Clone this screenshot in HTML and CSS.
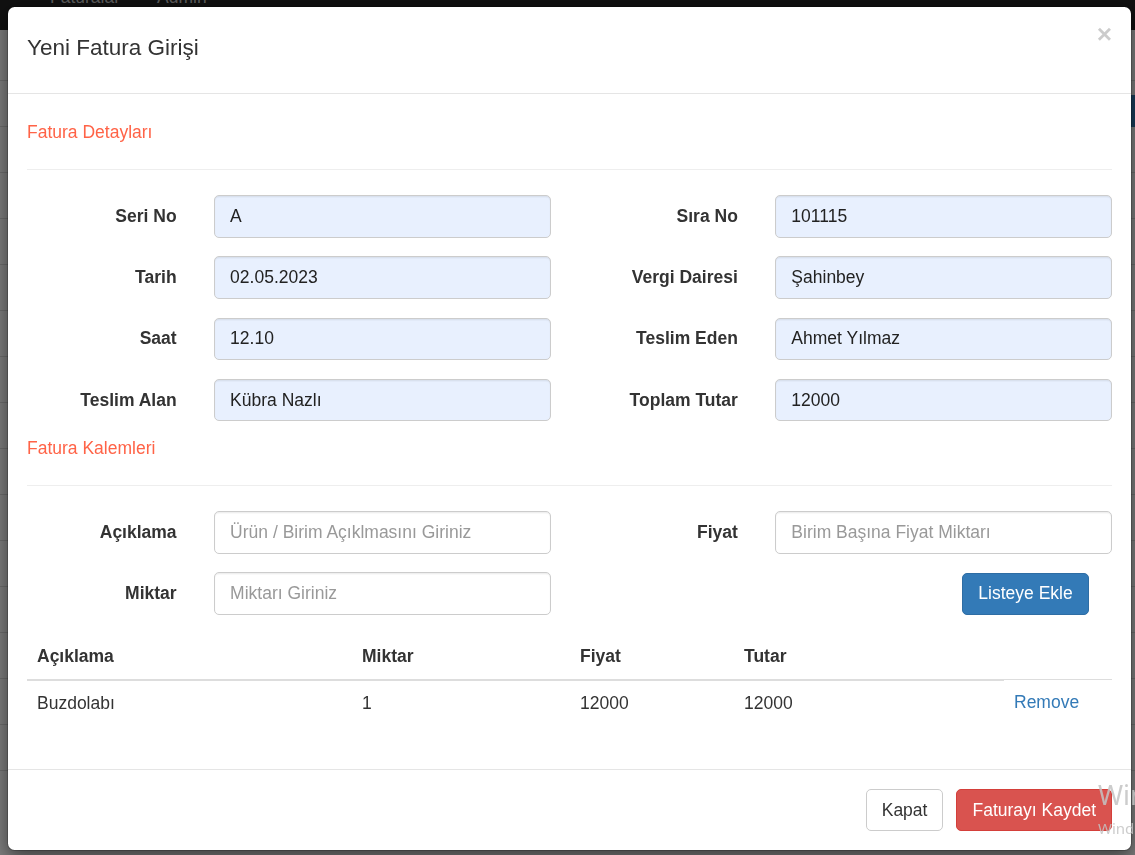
FILE: index.html
```html
<!DOCTYPE html>
<html lang="tr">
<head>
<meta charset="utf-8">
<title>Yeni Fatura Girişi</title>
<link rel="stylesheet" href="styles.css">
</head>
<body>
<div class="page">
  <nav class="navbar">
    <span class="nav-link">Faturalar</span>
    <span class="nav-link">Admin</span>
  </nav>
  <div class="page-spacer"></div>
  <div class="page-row page-row--head"><span class="page-btn"></span></div>
  <div class="page-row"></div>
  <div class="page-row"></div>
  <div class="page-row"></div>
  <div class="page-row"></div>
  <div class="page-row"></div>
  <div class="page-row"></div>
  <div class="page-row"></div>
  <div class="page-row"></div>
  <div class="page-row"></div>
  <div class="page-row"></div>
  <div class="page-row"></div>
  <div class="page-row"></div>
  <div class="page-row"></div>
  <div class="page-row"></div>
  <div class="page-row"></div>
</div>
<div class="backdrop"></div>

<div class="modal">
  <div class="modal-content">
    <div class="modal-header">
      <h4 class="modal-title">Yeni Fatura Girişi</h4>
      <button class="close" type="button">×</button>
    </div>
    <div class="modal-body">
      <div class="section-title section-title--first">Fatura Detayları</div>
      <hr class="divider">
      <div class="form-grid">
        <label class="form-label">Seri No</label>
        <input class="form-control filled" value="A">
        <label class="form-label">Sıra No</label>
        <input class="form-control filled" value="101115">

        <label class="form-label">Tarih</label>
        <input class="form-control filled" value="02.05.2023">
        <label class="form-label">Vergi Dairesi</label>
        <input class="form-control filled" value="Şahinbey">

        <label class="form-label">Saat</label>
        <input class="form-control filled" value="12.10">
        <label class="form-label">Teslim Eden</label>
        <input class="form-control filled" value="Ahmet Yılmaz">

        <label class="form-label">Teslim Alan</label>
        <input class="form-control filled" value="Kübra Nazlı">
        <label class="form-label">Toplam Tutar</label>
        <input class="form-control filled" value="12000">
      </div>

      <div class="section-title section-title--items">Fatura Kalemleri</div>
      <hr class="divider">
      <div class="form-grid form-grid--items">
        <label class="form-label">Açıklama</label>
        <input class="form-control" placeholder="Ürün / Birim Açıklmasını Giriniz">
        <label class="form-label">Fiyat</label>
        <input class="form-control" placeholder="Birim Başına Fiyat Miktarı">

        <label class="form-label">Miktar</label>
        <input class="form-control" placeholder="Miktarı Giriniz">
        <button class="btn btn-primary btn-add" type="button">Listeye Ekle</button>
      </div>

      <table class="items-table">
        <colgroup>
          <col class="col-desc">
          <col class="col-qty">
          <col class="col-price">
          <col class="col-total">
          <col class="col-action">
        </colgroup>
        <thead>
          <tr>
            <th>Açıklama</th>
            <th>Miktar</th>
            <th>Fiyat</th>
            <th>Tutar</th>
          </tr>
        </thead>
        <tbody>
          <tr>
            <td>Buzdolabı</td>
            <td>1</td>
            <td>12000</td>
            <td>12000</td>
            <td><a class="link" href="#">Remove</a></td>
          </tr>
        </tbody>
      </table>
    </div>
    <div class="modal-footer">
      <button class="btn btn-default" type="button">Kapat</button>
      <button class="btn btn-danger" type="button">Faturayı Kaydet</button>
    </div>
  </div>
</div>

<div class="watermark">
  <div class="watermark-title">Windows'u Etkinleştir</div>
  <div class="watermark-sub">Windows'u etkinleştirmek için Ayarlar'a gidin.</div>
</div>
</body>
</html>
```

FILE: styles.css
```css
* {
  box-sizing: border-box;
}

html,
body {
  margin: 0;
  padding: 0;
}

body {
  width: 1135px;
  height: 855px;
  overflow: hidden;
  background: #fff;
  color: #333;
  font-family: "Liberation Sans", Arial, sans-serif;
  font-size: 17.5px;
  line-height: 25px;
}

/* ---------- background page ---------- */
.navbar {
  height: 30px;
  background: #222;
  display: flex;
  align-items: flex-start;
  gap: 37px;
  padding-left: 50px;
  overflow: hidden;
}

.nav-link {
  color: #bbb;
  margin-top: -15.5px;
}

.page-spacer {
  height: 50px;
}

.page-row {
  height: 46px;
  border-top: 1px solid #ddd;
  display: flex;
  justify-content: flex-end;
}

.page-btn {
  width: 80px;
  height: 32px;
  margin-top: 14px;
  background: #337ab7;
}

.backdrop {
  position: fixed;
  inset: 0;
  background: rgba(0, 0, 0, 0.5);
}

/* ---------- modal ---------- */
.modal {
  position: absolute;
  left: 7.25px;
  top: 6px;
  width: 1124.5px;
}

.modal-content {
  background: #fff;
  background-clip: padding-box;
  border: 1px solid rgba(0, 0, 0, 0.2);
  border-radius: 7.5px;
  box-shadow: 0 6.25px 18.75px rgba(0, 0, 0, 0.5);
}

.modal-header {
  height: 87px;
  padding: 24.75px 18.75px 0;
  border-bottom: 1px solid #e5e5e5;
  display: flex;
  justify-content: space-between;
  align-items: flex-start;
}

.modal-title {
  margin: 0;
  font-size: 22.5px;
  font-weight: normal;
  line-height: 32px;
  color: #333;
}

.close {
  margin-top: -10.75px;
  padding: 0;
  border: 0;
  background: none;
  font-family: "Liberation Sans", Arial, sans-serif;
  font-size: 26.25px;
  font-weight: bold;
  line-height: 1;
  color: #000;
  opacity: 0.2;
}

.modal-body {
  padding: 18.75px;
}

.section-title {
  color: #ff6347;
  line-height: 25px;
}

.section-title--first {
  margin-top: 7.25px;
}

.section-title--items {
  margin-top: 14.75px;
}

.divider {
  height: 0;
  margin: 24px 0 25px;
  border: 0;
  border-top: 1px solid #eee;
}

.form-grid {
  display: grid;
  grid-template-columns: 4fr 9fr 4fr 9fr;
  column-gap: 37.5px;
  row-gap: 18.75px;
  align-items: center;
}

.form-grid--items {
  margin-bottom: 18.75px;
}

.form-label {
  text-align: right;
  font-weight: bold;
  color: #333;
}

.form-control {
  width: 100%;
  height: 42.5px;
  padding: 7.5px 15px;
  font: inherit;
  color: #555;
  background: #fff;
  border: 1px solid #ccc;
  border-radius: 5px;
  box-shadow: inset 0 1.25px 1.25px rgba(0, 0, 0, 0.075);
  outline: none;
}

.form-control.filled {
  background: #e8f0fe;
  color: #222;
}

.form-control::placeholder {
  color: #999;
  opacity: 1;
}

.btn {
  padding: 7.5px 15px;
  font: inherit;
  line-height: 25px;
  border: 1px solid transparent;
  border-radius: 5px;
  white-space: nowrap;
}

.btn-primary {
  background: #337ab7;
  border-color: #2e6da4;
  color: #fff;
}

.btn-default {
  background: #fff;
  border-color: #ccc;
  color: #333;
}

.btn-danger {
  background: #d9534f;
  border-color: #d43f3a;
  color: #fff;
}

.btn-add {
  grid-column: 4;
  justify-self: start;
  margin-left: 187px;
}

/* ---------- table ---------- */
.items-table {
  width: 100%;
  table-layout: fixed;
  border-collapse: collapse;
  border-spacing: 0;
  margin-bottom: 25px;
}

.col-desc { width: 325px; }
.col-qty { width: 218px; }
.col-price { width: 164px; }
.col-total { width: 270px; }

.items-table th {
  padding: 10px;
  text-align: left;
  vertical-align: bottom;
  font-weight: bold;
  line-height: 25px;
  border-bottom: 2px solid #ddd;
}

.items-table td {
  padding: 10px;
  line-height: 25px;
  border-top: 1px solid #ddd;
}

.link {
  color: #337ab7;
  text-decoration: none;
}

.modal-footer {
  padding: 18.75px;
  border-top: 1px solid #e5e5e5;
  display: flex;
  justify-content: flex-end;
  gap: 13px;
}

/* ---------- windows watermark ---------- */
.watermark {
  position: fixed;
  left: 1098px;
  top: 779px;
  white-space: nowrap;
  color: rgba(195, 195, 195, 0.85);
  font-family: "Noto Sans", "Open Sans", sans-serif;
}

.watermark-title {
  font-size: 27px;
  line-height: 32px;
}

.watermark-sub {
  margin-top: 6.5px;
  font-size: 15px;
  line-height: 20px;
}
```
